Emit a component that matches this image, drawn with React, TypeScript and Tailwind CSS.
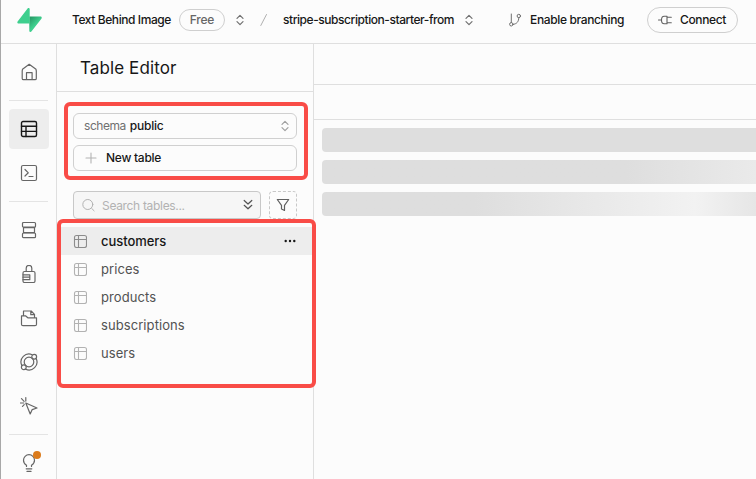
import type { ReactNode } from "react";

type IconProps = { size?: number; className?: string; sw?: number; box?: number; children: ReactNode };

function Icon({ size = 18, className = "", sw = 1.2, box = 18, children }: IconProps) {
  return (
    <svg
      width={size}
      height={size}
      viewBox={`0 0 ${box} ${box}`}
      fill="none"
      stroke="currentColor"
      strokeWidth={sw}
      strokeLinecap="round"
      strokeLinejoin="round"
      className={`shrink-0 ${className}`}
    >
      {children}
    </svg>
  );
}

function Logo() {
  return (
    <svg width="25" height="26" viewBox="0 0 25 26" className="shrink-0">
      <defs>
        <linearGradient id="bolt" x1="12" y1="10" x2="19" y2="17" gradientUnits="userSpaceOnUse">
          <stop offset="0" stopColor="#249361" />
          <stop offset="1" stopColor="#3ecf8e" />
        </linearGradient>
      </defs>
      <path d="M12.300 9.500h11c1.300 0 1.900 1.200 1.100 2.200L14.400 24.600c-.7.800-2.100.4-2.100-.8z" fill="url(#bolt)" />
      <path d="M12.700 16.600H1.700C.5 16.600-.1 15.300.6 14.400L10.600 1.500c.7-.8 2.100-.4 2.100.8z" fill="#3ecf8e" />
    </svg>
  );
}

function UpDown({ className = "" }: { className?: string }) {
  return (
    <Icon size={12} box={12} sw={1.2} className={className}>
      <path d="M3 4.300 6 1.300l3 3M3 7.700l3 3 3-3" />
    </Icon>
  );
}

function TopBar() {
  return (
    <header className="flex h-11 shrink-0 items-center border-b border-[#dfdfdf] pb-[3px] pl-4 text-[12px] font-[450] text-[#171717]">
      <Logo />
      <span className="ml-[30px] w-[100px] whitespace-nowrap tracking-[-0.42px]">Text Behind Image</span>
      <span className="ml-[7px] flex h-[22px] w-[46px] items-center justify-center rounded-full border border-[#cfcfcf] tracking-[-0.2px] text-[#666]">
        Free
      </span>
      <UpDown className="ml-[9px] text-[#707070]" />
      <Icon size={12} box={12} sw={1} className="ml-3 text-[#b0b0b0]">
        <path d="M2.800 11.500 8.500.5" />
      </Icon>
      <span className="ml-[13px] w-[172px] whitespace-nowrap tracking-[-0.44px]">stripe-subscription-starter-from</span>
      <UpDown className="ml-2 text-[#707070]" />
      <Icon size={14} box={14} sw={1} className="ml-[33px] text-[#707070]">
        <path d="M3.300 1v8.600M10.800 4.800c0 3.800-2 6.200-5.700 6.600" />
        <circle cx="3.300" cy="11.300" r="1.700" />
        <circle cx="10.800" cy="3" r="1.700" />
      </Icon>
      <span className="ml-2 w-[95px] whitespace-nowrap tracking-[-0.36px]">Enable branching</span>
      <button className="ml-[22px] flex h-[26px] w-[91px] items-center rounded-full border border-[#cfcfcf] pl-[10px]">
        <Icon size={14} box={14} sw={1.100} className="text-[#606060]">
          <path d="M.5 7h3M9 4.200h4.300M9 9.800h4.300M9 3.200v7.600H6.200C4.500 10.800 3.500 9.500 3.500 7s1-3.800 2.700-3.800z" />
        </Icon>
        <span className="ml-2 tracking-[-0.38px]">Connect</span>
      </button>
    </header>
  );
}

function NavItem({ active = false, children }: { active?: boolean; children: ReactNode }) {
  return (
    <div
      className={`relative flex h-10 w-10 shrink-0 items-center justify-center rounded ${
        active ? "bg-[#ededed] text-[#171717]" : "text-[#666]"
      }`}
    >
      {children}
    </div>
  );
}

function Divider({ className = "" }: { className?: string }) {
  return <div className={`h-px w-[39px] shrink-0 bg-[#e4e4e4] ${className}`} />;
}

function SideNav() {
  return (
    <nav className="flex w-14 shrink-0 flex-col overflow-hidden border-r border-[#dfdfdf] pl-2 pt-2">
      <NavItem>
        <Icon>
          <path d="M2.500 6.300 9.200 1.300l6.800 5 .3 1.500v7.600a1.300 1.300 0 0 1-1.300 1.300H3.500a1.300 1.300 0 0 1-1.300-1.300V7.800zM6.500 16.500v-6.800h5.600v6.800" />
        </Icon>
      </NavItem>
      <Divider className="mt-2" />
      <div className="mt-2 flex flex-col gap-1">
        <NavItem active>
          <Icon sw={1.400}>
            <rect x="1.500" y="1.500" width="15" height="15" rx="1.500" />
            <path d="M1.500 6.300h15M1.500 11.400h15M6 6.300v10.200" />
          </Icon>
        </NavItem>
        <NavItem>
          <Icon>
            <rect x="1.500" y="1.500" width="15" height="15" rx="1.500" />
            <path d="m5 5.500 3.300 3.300L5 12M9 12.500h4" />
          </Icon>
        </NavItem>
      </div>
      <Divider className="mt-2" />
      <div className="mt-2 flex flex-col gap-1">
        <NavItem>
          <Icon>
            <rect x="2.500" y="1.500" width="13" height="4.700" rx="1" />
            <rect x="3.500" y="6.600" width="11" height="5" />
            <rect x="2.500" y="12" width="13" height="4.700" rx="1" />
          </Icon>
        </NavItem>
        <NavItem>
          <Icon>
            <rect x="3" y="6.500" width="12" height="11" rx="1.500" />
            <path d="M6.200 6.500V3.200a2.800 2.800 0 0 1 5.600 0v3.300M3 9.800h6.800v4.900H3M3 12.200h6.800" />
          </Icon>
        </NavItem>
        <NavItem>
          <Icon>
            <path d="M3.500 7V2h7.700l3.300 3.300V8M10.800 2.200v3.500h3.500M1.500 6.800h4l2.300 2h8.700v6.400a1.500 1.500 0 0 1-1.500 1.500H3a1.500 1.500 0 0 1-1.500-1.500z" />
          </Icon>
        </NavItem>
        <NavItem>
          <Icon>
            <circle cx="9" cy="9" r="4.800" />
            <path d="M12.200 1.700A8 8 0 0 0 1.700 12.300M5.700 16.300A8 8 0 0 0 16.300 5.800" />
            <circle cx="14.200" cy="3.800" r="2.400" />
            <circle cx="3.800" cy="14.200" r="2.400" />
          </Icon>
        </NavItem>
        <NavItem>
          <Icon>
            <path d="m5.800 6 11.200 5-4.800 1.600-2 4.400zM5.800.6v3.500M1.500 1.700l2.600 2.600M.3 6h3.500M4.200 7.700l-1.700 1.700" />
          </Icon>
        </NavItem>
      </div>
      <Divider className="mt-2" />
      <div className="mt-2">
        <NavItem>
          <Icon>
            <path d="M6.500 12.500v-1.300C4.600 10 3.500 8.400 3.500 6.200a5.500 5.500 0 0 1 11 0c0 2.200-1.100 3.800-3 5v1.300M6.200 14.800h5.600M7 17.400h4" />
          </Icon>
          <span className="absolute left-6 top-2 h-2 w-2 rounded-full bg-[#db7b1c]" />
        </NavItem>
      </div>
    </nav>
  );
}

const tables = ["customers", "prices", "products", "subscriptions", "users"];

function TableRow({ name, active }: { name: string; active: boolean }) {
  return (
    <li
      className={`flex h-7 items-center pl-4 pr-[17px] text-[13px] ${
        active ? "bg-[#ededed] font-[450] text-[#171717]" : "text-[#525252]"
      }`}
    >
      <Icon size={14} box={14} sw={1.100} className={active ? "text-[#8c8c8c]" : "text-[#b2b2b2]"}>
        <rect x="1.500" y="1.500" width="12" height="12" rx="2" />
        <path d="M1.500 5.500h12M5.500 1.500v12" />
      </Icon>
      <span className={`ml-[14px] pt-[2px] ${active ? "tracking-[-0.05px]" : "tracking-[0.08px]"}`}>{name}</span>
      {active && (
        <Icon size={12} box={12} sw={0} className="ml-auto text-[#171717]">
          <g fill="currentColor">
            <circle cx="1.700" cy="6" r="1.200" />
            <circle cx="6" cy="6" r="1.200" />
            <circle cx="10.300" cy="6" r="1.200" />
          </g>
        </Icon>
      )}
    </li>
  );
}

function TablePanel() {
  return (
    <aside className="relative flex w-[257px] shrink-0 flex-col border-r border-[#dfdfdf]">
      <div className="flex h-12 shrink-0 items-center border-b border-[#dfdfdf] pl-[23px] pt-[2px] text-[17px] tracking-[0.1px] text-[#171717]">
        Table Editor
      </div>
      <div className="mt-[21px] flex flex-col gap-1.5 px-4 text-[12px]">
        <button className="flex h-[26px] items-center rounded-md border border-[#d0d0d0] pl-[10px] pr-[5px]">
          <span className="tracking-[-0.45px] text-[#707070]">schema</span>
          <span className="ml-1 font-[450] tracking-[-0.25px] text-[#171717]">public</span>
          <UpDown className="ml-auto text-[#a0a0a0]" />
        </button>
        <button className="flex h-[26px] items-center rounded-md border border-[#d0d0d0] pl-[11px] font-[450] text-[#171717]">
          <Icon size={12} box={12} sw={1.100} className="text-[#b2b2b2]">
            <path d="M6 1v10M1 6h10" />
          </Icon>
          <span className="ml-[9px] tracking-[-0.27px]">New table</span>
        </button>
      </div>
      <div className="mt-5 flex gap-2 px-4">
        <div className="flex h-7 w-[188px] items-center rounded border border-[#c8c8c8] bg-[#f6f6f6] pl-2 pr-[6px] text-[12px] text-[#b2b2b2]">
          <Icon size={14} box={14} sw={1}>
            <circle cx="5.800" cy="6.500" r="5" />
            <path d="m9.600 10.300 2.500 2.500" />
          </Icon>
          <span className="ml-[6px] pt-[2px] tracking-[-0.32px]">Search tables...</span>
          <Icon size={12} box={12} sw={1.200} className="ml-auto text-[#525252]">
            <path d="M2.200 1.500 6 5l3.800-3.500M2.200 6.300 6 9.800l3.800-3.500" />
          </Icon>
        </div>
        <div className="flex h-7 w-7 items-center justify-center rounded border border-dashed border-[#c8c8c8] text-[#606060]">
          <Icon size={14} box={14} sw={1.200}>
            <path d="M1.300 1.500h11.400L8.500 7.300v5.200l-3-1.500V7.300z" />
          </Icon>
        </div>
      </div>
      <ul className="mt-2">
        {tables.map((name, i) => (
          <TableRow key={name} name={name} active={i === 0} />
        ))}
      </ul>
      <div className="absolute left-[7px] top-[58px] h-[78px] w-[244px] rounded-md border-4 border-[#f94c47]" />
      <div className="absolute left-0 top-[175px] h-[169px] w-[259px] rounded-md border-4 border-[#f94c47]" />
    </aside>
  );
}

function Content() {
  return (
    <main className="flex min-w-0 flex-1 flex-col">
      <div className="h-[41px] border-b border-[#dfdfdf]" />
      <div className="h-[35px] border-b border-[#dfdfdf]" />
      <div className="flex flex-col gap-2 pl-2 pt-2">
        <div className="h-6 rounded-l bg-[#dedede]" />
        <div className="h-6 rounded-l bg-linear-to-r from-[#dedede] from-70% to-[#eaeaea]" />
        <div className="h-6 rounded-l bg-linear-to-r from-[#dedede] from-35% via-[#f2f2f2] via-86% to-[#e6e6e6]" />
      </div>
    </main>
  );
}

export default function App() {
  return (
    <div className="flex h-[479px] w-[756px] flex-col overflow-hidden border-l border-[#a8a8a8] bg-[#fcfcfc] font-['Inter','Liberation_Sans',sans-serif]">
      <TopBar />
      <div className="flex min-h-0 flex-1">
        <SideNav />
        <TablePanel />
        <Content />
      </div>
    </div>
  );
}
